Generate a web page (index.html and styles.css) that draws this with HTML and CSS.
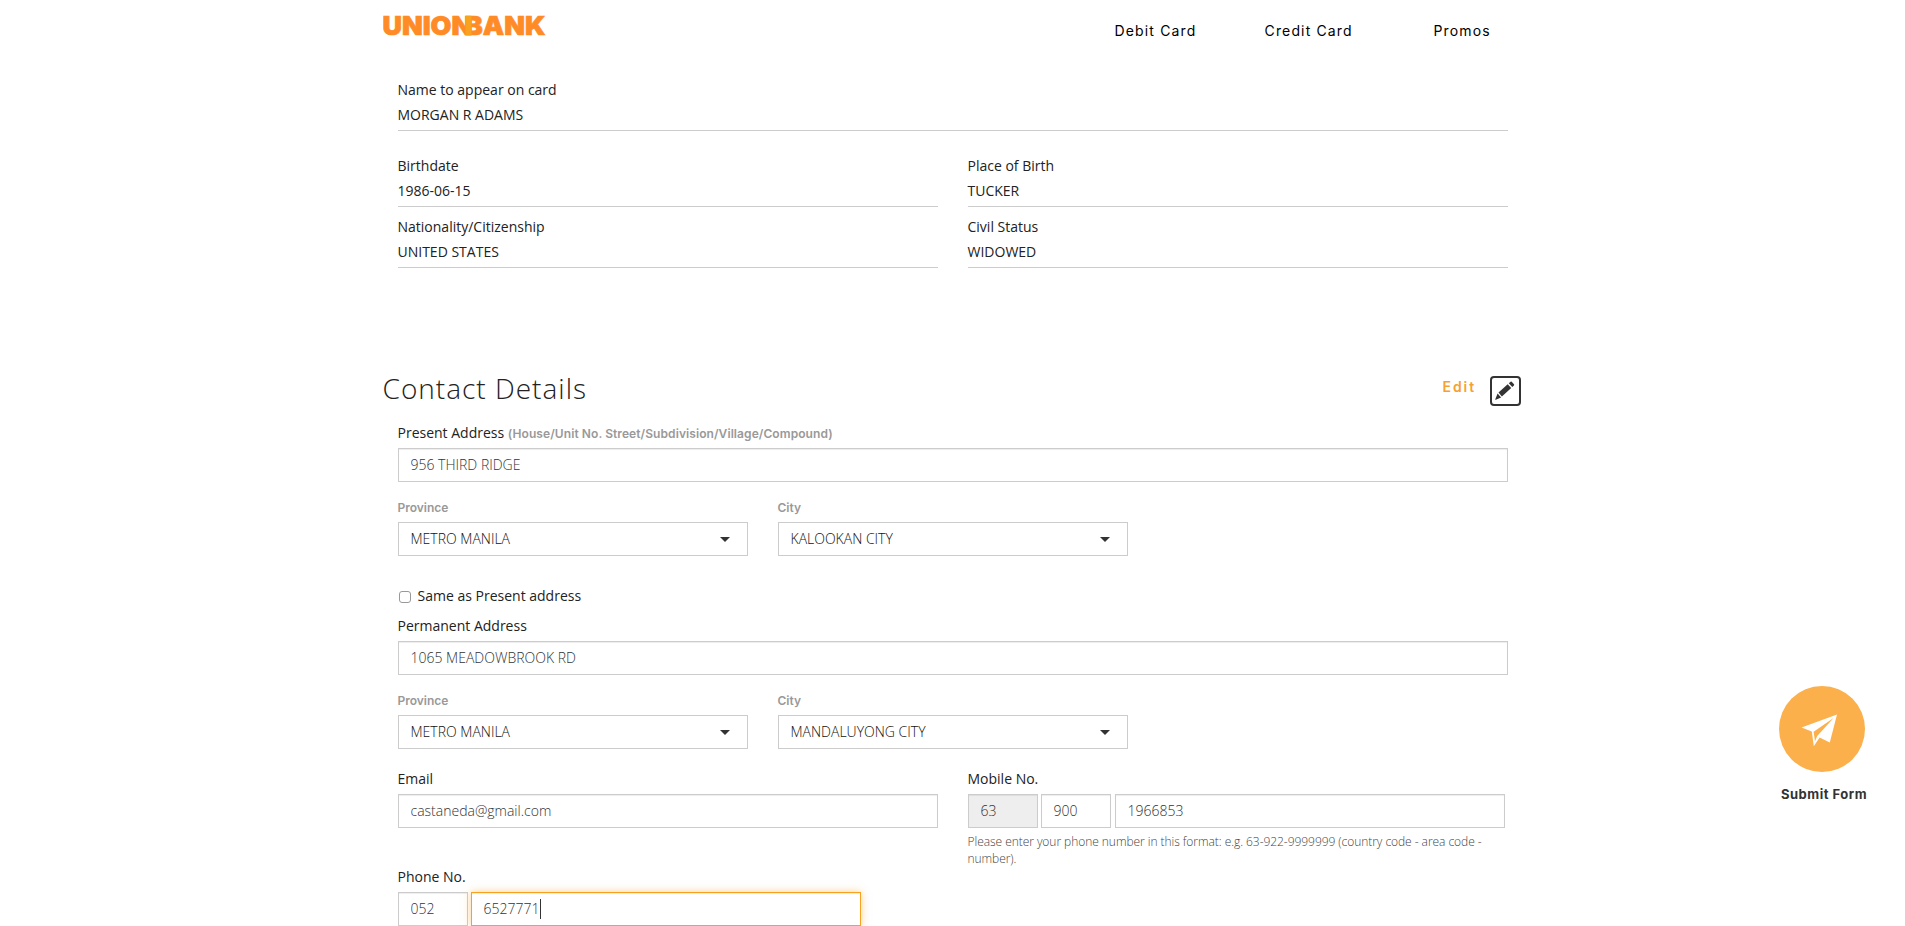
FILE: index.html
```html
<!DOCTYPE html>
<html lang="en">
<head>
<meta charset="utf-8">
<title>UnionBank</title>
<link rel="stylesheet" href="styles.css">
</head>
<body>
<div class="container">
  <header class="header">
    <svg class="logo" width="168" height="34" viewBox="0 -5 168 34">
      <text class="logo-text" x="-0.500" y="21" textLength="163" lengthAdjust="spacingAndGlyphs">UNION<tspan dx="-7">BANK</tspan></text>
      <rect x="82.500" y="2" width="6" height="19.500" fill="#f9a21f"/>
    </svg>
    <nav class="nav">
      <a class="nav-debit">Debit Card</a>
      <a class="nav-credit">Credit Card</a>
      <a class="nav-promos">Promos</a>
    </nav>
  </header>

  <section class="personal">
    <div class="readonly name"><label>Name to appear on card</label><p>MORGAN R ADAMS</p></div>
    <div class="halves">
      <div class="readonly"><label>Birthdate</label><p>1986-06-15</p></div>
      <div class="readonly"><label>Place of Birth</label><p>TUCKER</p></div>
      <div class="readonly"><label>Nationality/Citizenship</label><p>UNITED STATES</p></div>
      <div class="readonly"><label>Civil Status</label><p>WIDOWED</p></div>
    </div>
  </section>

  <div class="section-head">
    <h2>Contact Details</h2>
    <div class="edit">
      <span>Edit</span>
      <svg width="31" height="30" viewBox="0 0 31 30">
        <rect x="1" y="1" width="29" height="28" rx="3" fill="#fff" stroke="#333" stroke-width="2"/>
        <path fill="#333" d="M8.500 16.500L17.700 8.200L21.200 12L11.900 20.400ZM18.800 7.300L20.600 5.700Q21.200 5.300 21.700 5.800L24 8.300Q24.400 8.900 23.900 9.400L22.300 10.900ZM7.600 17.600L11.100 21.400L5.800 23.800Q5 24 5.300 23.200Z"/>
      </svg>
    </div>
  </div>

  <section class="contact">
    <label>Present Address <small class="hint">(House/Unit No. Street/Subdivision/Village/Compound)</small></label>
    <input class="field" value="956 THIRD RIDGE">
    <div class="thirds">
      <div><small class="sub">Province</small><div class="select">METRO MANILA<i class="caret"></i></div></div>
      <div><small class="sub">City</small><div class="select">KALOOKAN CITY<i class="caret"></i></div></div>
    </div>

    <div class="same"><span class="box"></span><span>Same as Present address</span></div>
    <label>Permanent Address</label>
    <input class="field" value="1065 MEADOWBROOK RD">
    <div class="thirds">
      <div><small class="sub">Province</small><div class="select">METRO MANILA<i class="caret"></i></div></div>
      <div><small class="sub">City</small><div class="select">MANDALUYONG CITY<i class="caret"></i></div></div>
    </div>

    <div class="halves reach">
      <div><label>Email</label><input class="field" value="castaneda@gmail.com"></div>
      <div>
        <label>Mobile No.</label>
        <div class="phone mobile">
          <input class="field code" value="63" disabled>
          <input class="field code" value="900">
          <input class="field number" value="1966853">
        </div>
        <p class="help">Please enter your phone number in this format: e.g. 63-922-9999999 (country code - area code - number).</p>
      </div>
    </div>
    <label>Phone No.</label>
    <div class="phone">
      <input class="field code" value="052">
      <div class="field number focused">6527771<i class="cursor"></i></div>
    </div>
  </section>
</div>

<div class="submit">
  <svg width="86" height="86" viewBox="0 0 86 86">
    <circle cx="43" cy="43" r="43" fill="#fbb04c"/>
    <path fill="#fff" d="M22.500 41.500L58 28.500L50.800 56.500L40.600 51.600L34.800 60.300L32.800 45.600ZM34.600 45.800L36 55.300L38.200 50.100L54.600 31.900Z" fill-rule="evenodd"/>
  </svg>
  <span>Submit Form</span>
</div>
</body>
</html>
```

FILE: styles.css
```css
* { box-sizing: border-box; }
body {
  margin: 0;
  height: 926px;
  overflow: hidden;
  background: #fff;
  color: #333;
  font: 14px/20px "Open Sans", sans-serif;
}
p, h2 { margin: 0; }
label { display: block; height: 20px; color: #222; }
.container { width: 1140px; margin: 0 0 0 382.5px; }

.header { display: flex; justify-content: space-between; height: 80px; padding-top: 9px; }
.logo-text { font: 900 26px Inter, sans-serif; fill: #ff8b26; stroke: #ff8b26; stroke-width: .7px; }
.nav {
  display: flex;
  padding: 12px 0 0;
  color: #000;
  font: 14px/20px Inter, sans-serif;
  letter-spacing: 1.15px;
}
.nav-debit { width: 150px; }
.nav-credit { width: 169px; }
.nav-promos { width: 89px; }

.personal { height: 288px; padding: 0 15px; }
.readonly { height: 51px; border-bottom: 1px solid #ccc; }
.readonly p { margin-top: 5px; color: #222; }
.name { margin-bottom: 25px; }
.halves { display: grid; grid-template-columns: 540px 540px; column-gap: 30px; row-gap: 10px; }

.section-head { display: flex; justify-content: space-between; height: 55px; }
.section-head h2 { color: #222; font-size: 28px; font-weight: 300; line-height: 40px; letter-spacing: 1px; }
.edit { display: flex; gap: 14px; padding: 8px 1.5px 0 0; }
.edit span { font: 600 14px/22px Inter, sans-serif; letter-spacing: 1.9px; color: #f7a030; }

.contact { padding: 0 15px; }
.hint, .sub { font: 600 12px/20px Inter, sans-serif; color: #999; }
.hint { letter-spacing: .08px; }
.sub { display: block; height: 25px; padding-top: 1px; }
.field, .select {
  display: block;
  width: 100%;
  height: 34px;
  padding: 6px 12px;
  border: 1px solid #ccc;
  border-radius: 0;
  background: #fff;
  color: #333;
  font: 300 14px/20px "Open Sans", sans-serif;
}
.contact > .field, .halves .field, .phone .field { margin-top: 5px; }
.field { box-shadow: inset 0 1px 1px rgba(0, 0, 0, .075); }
input.field { padding: 5px 12px 7px; }
.select { position: relative; color: #111; }
.caret {
  position: absolute;
  right: 17px;
  top: 14px;
  border: 5px solid transparent;
  border-top-color: #333;
  border-bottom: 0;
}
.thirds { display: grid; grid-template-columns: 350px 350px; gap: 30px; margin-top: 15px; }
.same { display: flex; align-items: center; gap: 7px; height: 20px; margin: 30px 0 10px 1px; color: #222; }
.box { width: 12px; height: 12px; margin-top: 1px; border: 1px solid #999; border-radius: 3px; }
.reach { height: 98px; margin-top: 20px; }
.phone { display: flex; gap: 3px; }
.phone .code { width: 70px; }
.phone .number { width: 390px; }
.mobile .number { margin-left: 1px; }
.field:disabled { background: #eee; }
.help { margin-top: 5px; color: #444; font-weight: 300; font-size: 12px; line-height: 17px; letter-spacing: -.05px; }
.focused { border-color: #f9a21f; box-shadow: inset 0 1px 1px rgba(0, 0, 0, .075), 0 0 8px rgba(249, 162, 31, .5); }
.cursor { display: inline-block; width: 1px; height: 20px; margin-left: 1px; background: #333; vertical-align: top; }

.submit { position: absolute; left: 1773px; top: 686px; width: 102px; display: flex; flex-direction: column; align-items: center; }
.submit svg { margin-right: 4px; }
.submit span { margin-top: 12px; font: 700 13px/20px Inter, sans-serif; letter-spacing: .5px; }
```
